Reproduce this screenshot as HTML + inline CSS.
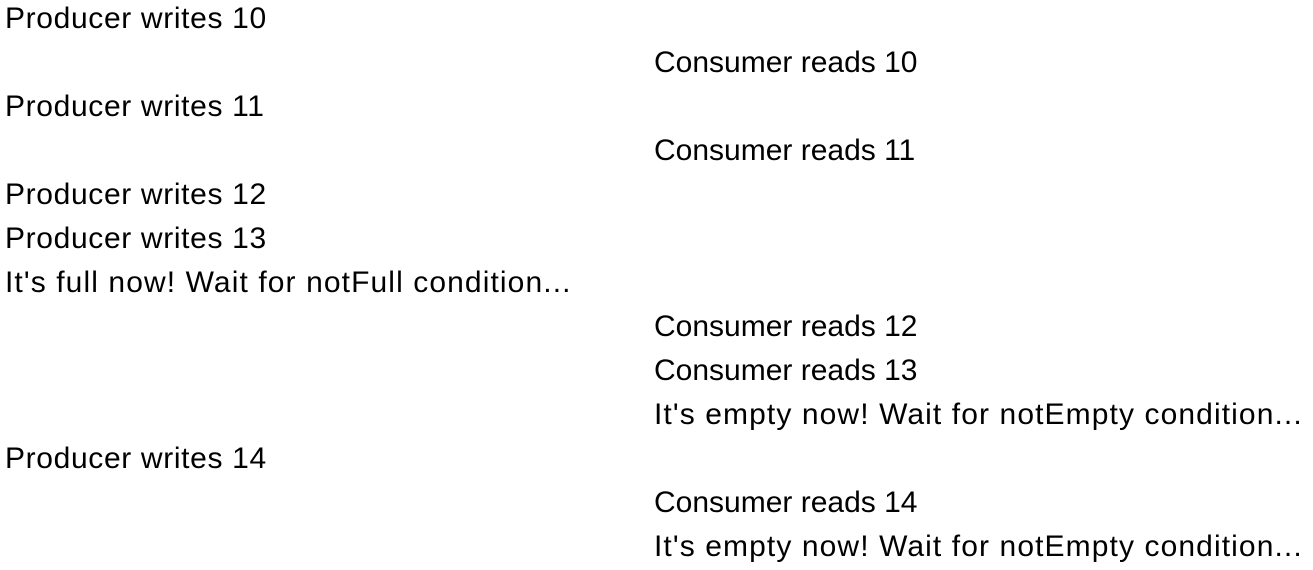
<!DOCTYPE html>
<html><head><meta charset="utf-8"><style>
html,body{margin:0;padding:0;background:#fff;width:1313px;height:570px;overflow:hidden}
body{font-family:"Liberation Sans",sans-serif;font-size:30px;letter-spacing:0.65px;color:#000}
.l{position:absolute;height:44px;line-height:44px;white-space:nowrap}
.a{left:5px}.b{left:654px}
.w{letter-spacing:1.1px}
.c{letter-spacing:0.0px}
</style></head><body>
<div class="l a" style="top:-3px">Producer writes 10</div>
<div class="l b c" style="top:41px">Consumer reads 10</div>
<div class="l a" style="top:85px">Producer writes 11</div>
<div class="l b c" style="top:129px">Consumer reads 11</div>
<div class="l a" style="top:173px">Producer writes 12</div>
<div class="l a" style="top:217px">Producer writes 13</div>
<div class="l a w" style="top:261px">It's full now! Wait for notFull condition...</div>
<div class="l b c" style="top:305px">Consumer reads 12</div>
<div class="l b c" style="top:349px">Consumer reads 13</div>
<div class="l b w" style="top:393px">It's empty now! Wait for notEmpty condition...</div>
<div class="l a" style="top:437px">Producer writes 14</div>
<div class="l b c" style="top:481px">Consumer reads 14</div>
<div class="l b w" style="top:525px">It's empty now! Wait for notEmpty condition...</div>
</body></html>
